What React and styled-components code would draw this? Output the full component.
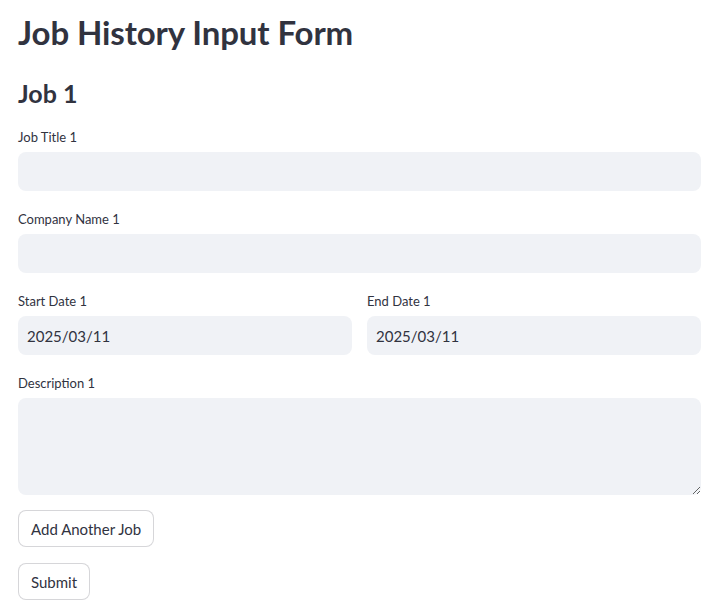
import React from 'react';
import styled, { createGlobalStyle } from 'styled-components';

const GlobalStyle = createGlobalStyle`
    html, body {
        margin: 0;
        padding: 0;
        background: #fff;
    }
    body {
        font-family: Lato, "Noto Sans", sans-serif;
        color: #31333f;
    }
`;

const Page = styled.div`
    width: 719px;
    padding: 8px 18px 0;
    box-sizing: border-box;
`;

const Title = styled.h1`
    margin: 0;
    font-size: 33px;
    font-weight: 700;
    line-height: 48px;
    letter-spacing: -0.1px;
`;

const SubTitle = styled.h2`
    margin: 19px 0 0;
    font-size: 25px;
    font-weight: 700;
    line-height: 36px;
`;

const Fields = styled.div`
    display: flex;
    flex-direction: column;
    gap: 18px;
    margin-top: 16px;
`;

const Row = styled.div`
    display: grid;
    grid-template-columns: 1fr 1fr;
    gap: 15px;
`;

const Field = styled.div`
    display: flex;
    flex-direction: column;
`;

const Label = styled.label`
    font-size: 13px;
    line-height: 20px;
    margin-bottom: 5px;
`;

const Input = styled.input`
    height: 39px;
    box-sizing: border-box;
    border: none;
    border-radius: 8px;
    background: #f0f2f6;
    padding: 0 9px;
    font-family: inherit;
    font-size: 15px;
    color: #31333f;
    outline: none;
`;

const TextArea = styled.textarea`
    height: 97px;
    box-sizing: border-box;
    border: none;
    border-radius: 8px;
    background: #f0f2f6;
    padding: 10px 9px;
    font-family: inherit;
    font-size: 15px;
    color: #31333f;
    outline: none;
    resize: vertical;
`;

const Actions = styled.div`
    display: flex;
    flex-direction: column;
    align-items: flex-start;
    gap: 16px;
    margin-top: 15px;
`;

const Button = styled.button`
    height: 37px;
    padding: 0 12px;
    background: #fff;
    border: 1px solid rgba(49, 51, 63, 0.2);
    border-radius: 8px;
    font-family: inherit;
    font-size: 15px;
    color: #31333f;
`;

export default function App() {
    return (
        <Page>
            <GlobalStyle />
            <Title>Job History Input Form</Title>
            <SubTitle>Job 1</SubTitle>
            <Fields>
                <Field>
                    <Label>Job Title 1</Label>
                    <Input type="text" />
                </Field>
                <Field>
                    <Label>Company Name 1</Label>
                    <Input type="text" />
                </Field>
                <Row>
                    <Field>
                        <Label>Start Date 1</Label>
                        <Input type="text" defaultValue="2025/03/11" />
                    </Field>
                    <Field>
                        <Label>End Date 1</Label>
                        <Input type="text" defaultValue="2025/03/11" />
                    </Field>
                </Row>
                <Field>
                    <Label>Description 1</Label>
                    <TextArea />
                </Field>
            </Fields>
            <Actions>
                <Button>Add Another Job</Button>
                <Button>Submit</Button>
            </Actions>
        </Page>
    );
}
